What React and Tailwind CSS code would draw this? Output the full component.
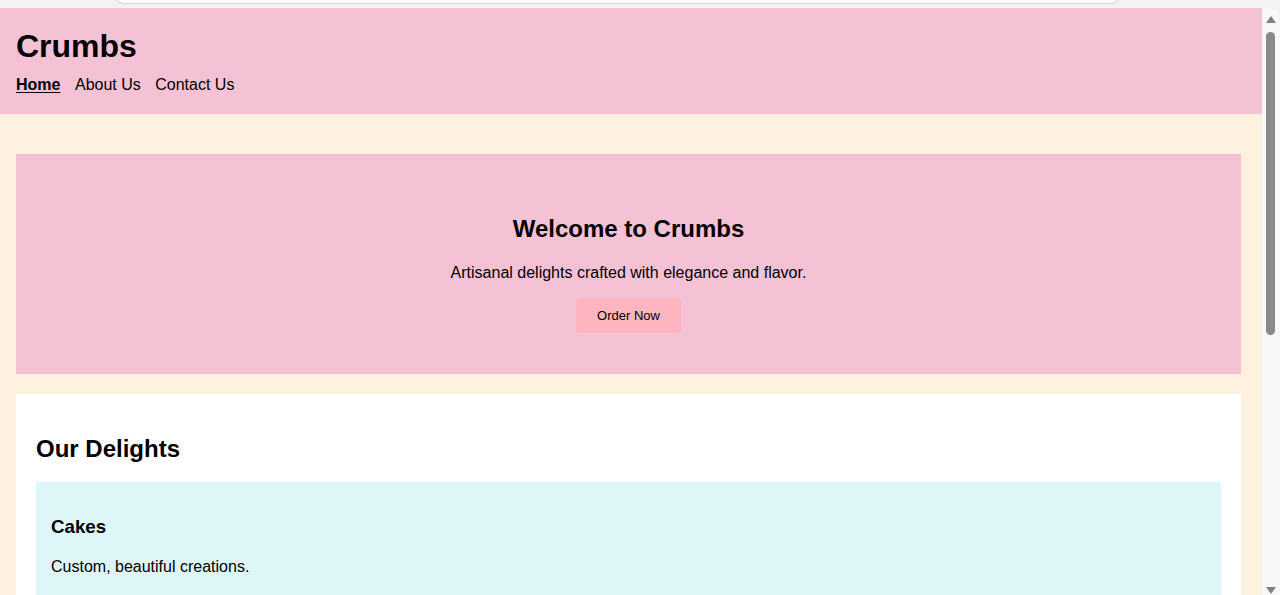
export default function App() {
  return (
    <div className="relative h-[595px] w-[1280px] overflow-hidden bg-[#f3f3f3] font-['Liberation_Sans',Arial,sans-serif] text-black">
      {/* browser chrome remnant */}
      <div className="relative h-2 w-full">
        <div className="absolute bottom-[4px] left-[112px] h-[12px] w-[1010px] rounded-b-[12px] border border-t-0 border-[#d6d6d6] bg-white" />
      </div>

      <div className="flex h-[587px]">
        <div className="h-full w-[1262px] overflow-hidden bg-[#fef1df]">
          <header className="bg-[#f5c1d5] px-4 pt-5 pb-5">
            <h1 className="text-[32px] font-bold leading-[37px]">Crumbs</h1>
            <nav className="mt-[11px] flex gap-[14.5px] text-base leading-[18px]">
              <a className="font-bold underline underline-offset-2">Home</a>
              <a>About Us</a>
              <a>Contact Us</a>
            </nav>
          </header>

          <main className="flex w-[1241px] flex-col gap-5 pt-10 pl-4">
            <section className="bg-[#f5c1d5] px-10 pt-10 pb-[41px] text-center">
              <h2 className="mt-[21px] mb-[21px] text-2xl font-bold leading-7">
                Welcome to Crumbs
              </h2>
              <p className="text-base leading-[18px]">
                Artisanal delights crafted with elegance and flavor.
              </p>
              <button className="mt-4 h-[35px] w-[105px] rounded bg-[#ffb5c0] text-[13px]">
                Order Now
              </button>
            </section>

            <section className="bg-white p-5">
              <h2 className="mt-[21px] mb-[19px] text-2xl font-bold leading-7">
                Our Delights
              </h2>
              <div className="bg-[#dff6f9] p-[15px]">
                <h3 className="mt-[18.72px] mb-5 text-[18.72px] font-bold leading-[22px]">
                  Cakes
                </h3>
                <p className="text-base leading-[18px]">
                  Custom, beautiful creations.
                </p>
                <div className="h-16" />
              </div>
            </section>
          </main>
        </div>

        {/* scrollbar */}
        <div className="relative h-full w-[18px] rounded-tr-[10px] bg-[#f8f8f8]">
          <div className="absolute top-[8px] left-[4px] h-0 w-0 border-x-[5px] border-b-[7px] border-x-transparent border-b-[#808080]" />
          <div className="absolute top-[24px] left-[4px] h-[303px] w-[9px] rounded-full bg-[#8a8a8a]" />
          <div className="absolute bottom-[1px] left-[4px] h-0 w-0 border-x-[5px] border-t-[7px] border-x-transparent border-t-[#808080]" />
        </div>
      </div>
    </div>
  );
}
